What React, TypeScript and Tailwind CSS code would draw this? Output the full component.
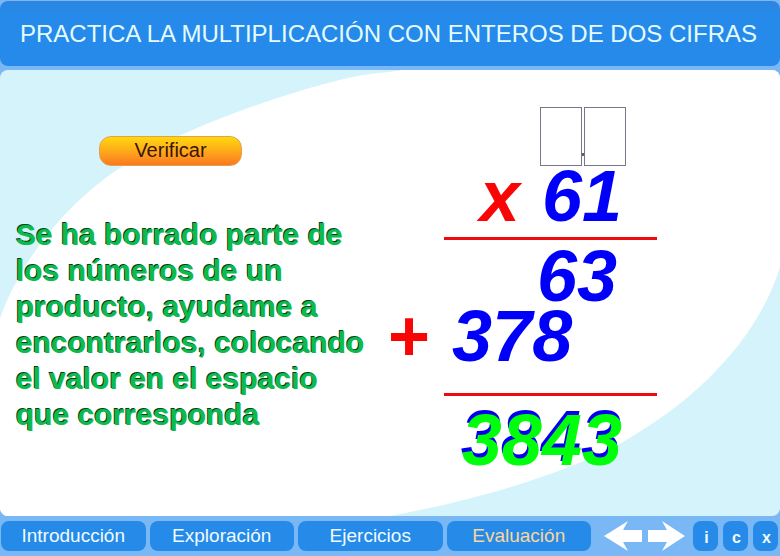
import React from "react";

const sections = [
  { label: "Introducción", active: false },
  { label: "Exploración", active: false },
  { label: "Ejercicios", active: false },
  { label: "Evaluación", active: true },
];

const tools = [
  { label: "i", title: "Información" },
  { label: "c", title: "Créditos" },
  { label: "x", title: "Cerrar" },
];

function Backdrop() {
  return (
    <svg
      className="absolute inset-0 h-full w-full"
      viewBox="0 0 780 446"
      preserveAspectRatio="none"
      aria-hidden="true"
    >
      <path
        d="M0 248 C18 198 55 147 103 110 S230 42 300 21 S375 5 402 0 H780 V197 C765 245 737 280 710 307 S653 354 623 372 S510 424 390 446 H0 Z"
        fill="#ffffff"
      />
    </svg>
  );
}

function DigitBox({ label }: { label: string }) {
  return (
    <input
      type="text"
      maxLength={1}
      aria-label={label}
      className="h-[59px] w-[42px] border border-[#77778a] bg-white text-center text-5xl font-bold text-[#0000f5] italic outline-none"
    />
  );
}

function Operation() {
  return (
    <div className="w-[269px] shrink-0 text-[72px] leading-[60px] font-bold text-[#0000fa] italic">
      <div className="flex justify-end pr-[31px]">
        <DigitBox label="Decenas" />
        <span className="mb-[10px] h-[3px] w-[2px] self-end bg-[#5a5a8c]" aria-hidden="true" />
        <DigitBox label="Unidades" />
      </div>
      <div className="flex justify-end gap-[22px] pr-[35px]">
        <span className="text-[#fa0505]">x</span>
        <span>61</span>
      </div>
      <hr className="mt-[11px] ml-14 h-[3px] border-0 bg-[#f00a10]" />
      <div className="mt-[6px] flex justify-end pr-10">63</div>
      <div className="flex gap-[22px]">
        <span className="text-[#fa0505] not-italic">+</span>
        <span>378</span>
      </div>
      <hr className="mt-[27px] ml-14 h-[3px] border-0 bg-[#f00a10]" />
      <div className="mt-[14px] flex justify-end pr-[35px]">
        <span className="text-[#00ff0a] [text-shadow:-1px_-4px_0_#0000f0]">3843</span>
      </div>
    </div>
  );
}

export default function App() {
  return (
    <div className="flex min-h-screen flex-col bg-[#79b8f4] pt-[1px] font-['Liberation_Sans',Arial,sans-serif]">
      <header className="flex h-[65px] items-center rounded-lg bg-gradient-to-b from-[#2c85e0] via-[#268aea] via-20% to-[#268aea] px-5">
        <h1 className="text-2xl whitespace-nowrap text-[#e4fcff]">
          PRACTICA LA MULTIPLICACIÓN CON ENTEROS DE DOS CIFRAS
        </h1>
      </header>

      <main className="relative mt-1 flex-1 overflow-hidden rounded-lg bg-[#d4f3fb]">
        <Backdrop />
        <div className="relative flex items-start justify-between pr-[123px] pl-4">
          <section className="w-[354px] pt-[66px]">
            <button
              type="button"
              className="ml-[83px] flex h-[30px] w-[143px] items-center justify-center rounded-xl border border-[#e5a04c] bg-gradient-to-b from-[#ffd80a] to-[#fa7820] pb-[2px] text-xl text-[#3a1508]"
            >
              Verificar
            </button>
            <p className="mt-[51px] text-[30px] leading-9 font-bold text-[#0cbb4c] [text-shadow:-1px_-1px_0_#063c18]">
              Se ha borrado parte de los números de un producto, ayudame a encontrarlos, colocando el
              valor en el espacio que corresponda
            </p>
          </section>
          <div className="pt-[37px]">
            <Operation />
          </div>
        </div>
      </main>

      <nav className="flex h-10 shrink-0 items-start gap-1 pt-[5px] pr-[2px] pl-[1px] text-white">
        {sections.map((s) => (
          <button
            key={s.label}
            type="button"
            className={`h-[30px] flex-1 rounded-lg bg-[#268ae8] text-[19px] leading-[30px] ${
              s.active ? "text-[#f8d69c]" : "text-[#effcff]"
            }`}
          >
            {s.label}
          </button>
        ))}
        <div className="ml-2 flex gap-1">
          <button type="button" aria-label="Anterior" className="h-[30px] w-[39px]">
            <svg width="39" height="30" viewBox="0 0 39 30" fill="#ffffff" aria-hidden="true">
              <path d="M1 15 L25 0 L20 9 H39 V21 H20 L25 30 Z" />
            </svg>
          </button>
          <button type="button" aria-label="Siguiente" className="h-[30px] w-[39px]">
            <svg width="39" height="30" viewBox="0 0 39 30" fill="#ffffff" aria-hidden="true">
              <path d="M39 15 L16 0 L21 9 H2 V21 H21 L16 30 Z" />
            </svg>
          </button>
        </div>
        <div className="ml-1 flex gap-[5px]">
          {tools.map((t) => (
            <button
              key={t.label}
              type="button"
              aria-label={t.title}
              className="h-[30px] w-[25px] rounded-lg bg-[#268ae8] pt-1 pl-[2px] text-base font-bold text-[#effcff]"
            >
              {t.label}
            </button>
          ))}
        </div>
      </nav>
    </div>
  );
}
